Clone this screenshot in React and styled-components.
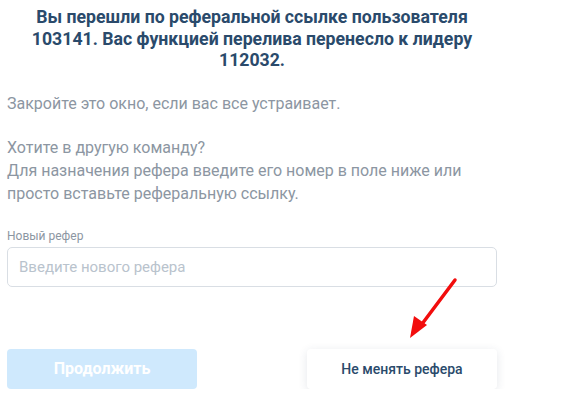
import React from 'react'
import styled, { createGlobalStyle } from 'styled-components'

const Global = createGlobalStyle`
  body {
    margin: 0;
    background: #fff;
    font-family: Roboto, "Noto Sans", sans-serif;
  }
`

function Arrow() {
  return (
    <ArrowSvg width="60" height="70" viewBox="0 0 60 70">
      <line x1="50" y1="4" x2="17" y2="48" stroke="#f20d0d" strokeWidth="3.5" strokeLinecap="round" />
      <polygon points="5,62 9,40 22,49" fill="#f20d0d" />
    </ArrowSvg>
  )
}

export default function App() {
  return (
    <Page>
      <Global />
      <Heading>
        Вы перешли по реферальной ссылке пользователя 103141. Вас функцией перелива перенесло к лидеру 112032.
      </Heading>
      <Text>Закройте это окно, если вас все устраивает.</Text>
      <Text>
        Хотите в другую команду?<br />
        Для назначения рефера введите его номер в поле ниже или<br />
        просто вставьте реферальную ссылку.
      </Text>
      <Field>
        <Label>Новый рефер</Label>
        <Input placeholder="Введите нового рефера" />
      </Field>
      <Buttons>
        <Primary disabled>Продолжить</Primary>
        <Secondary>
          Не менять рефера
          <Arrow />
        </Secondary>
      </Buttons>
    </Page>
  )
}

const Page = styled.div`
  width: 490px;
  padding: 7px 0 0 7px;
  display: flex;
  flex-direction: column;
`

const Heading = styled.h1`
  margin: 0 auto;
  width: 460px;
  text-align: center;
  font-size: 17.7px;
  line-height: 21.5px;
  font-weight: 700;
  color: #2a4a6b;
`

const Text = styled.p`
  margin: 20px 0 0;
  font-size: 16px;
  line-height: 23px;
  color: #8c96a2;

  & + & {
    margin-top: 21px;
  }
`

const Field = styled.div`
  margin-top: 24px;
  display: flex;
  flex-direction: column;
  gap: 4px;
`

const Label = styled.label`
  font-size: 12px;
  line-height: 14px;
  color: #8c96a2;
`

const Input = styled.input`
  box-sizing: border-box;
  height: 40px;
  width: 100%;
  border: 1px solid #d9dee4;
  border-radius: 5px;
  padding: 0 11px;
  font-family: inherit;
  font-size: 15px;
  color: #2a4a6b;
  outline: none;

  &::placeholder {
    color: #b9c3cd;
  }
`

const Buttons = styled.div`
  margin-top: 62px;
  display: flex;
  justify-content: space-between;
`

const Primary = styled.button`
  width: 190px;
  height: 40px;
  border: none;
  border-radius: 4px;
  background: #cfe9fd;
  color: #fff;
  font-family: inherit;
  font-size: 16px;
  font-weight: 700;
`

const Secondary = styled.button`
  position: relative;
  width: 190px;
  height: 40px;
  border: none;
  border-radius: 4px;
  background: #fff;
  box-shadow: 0 2px 10px rgba(40, 60, 90, 0.12);
  color: #2a4a6b;
  font-family: inherit;
  font-size: 14px;
  font-weight: 500;
`

const ArrowSvg = styled.svg`
  position: absolute;
  left: 98px;
  top: -73px;
`
